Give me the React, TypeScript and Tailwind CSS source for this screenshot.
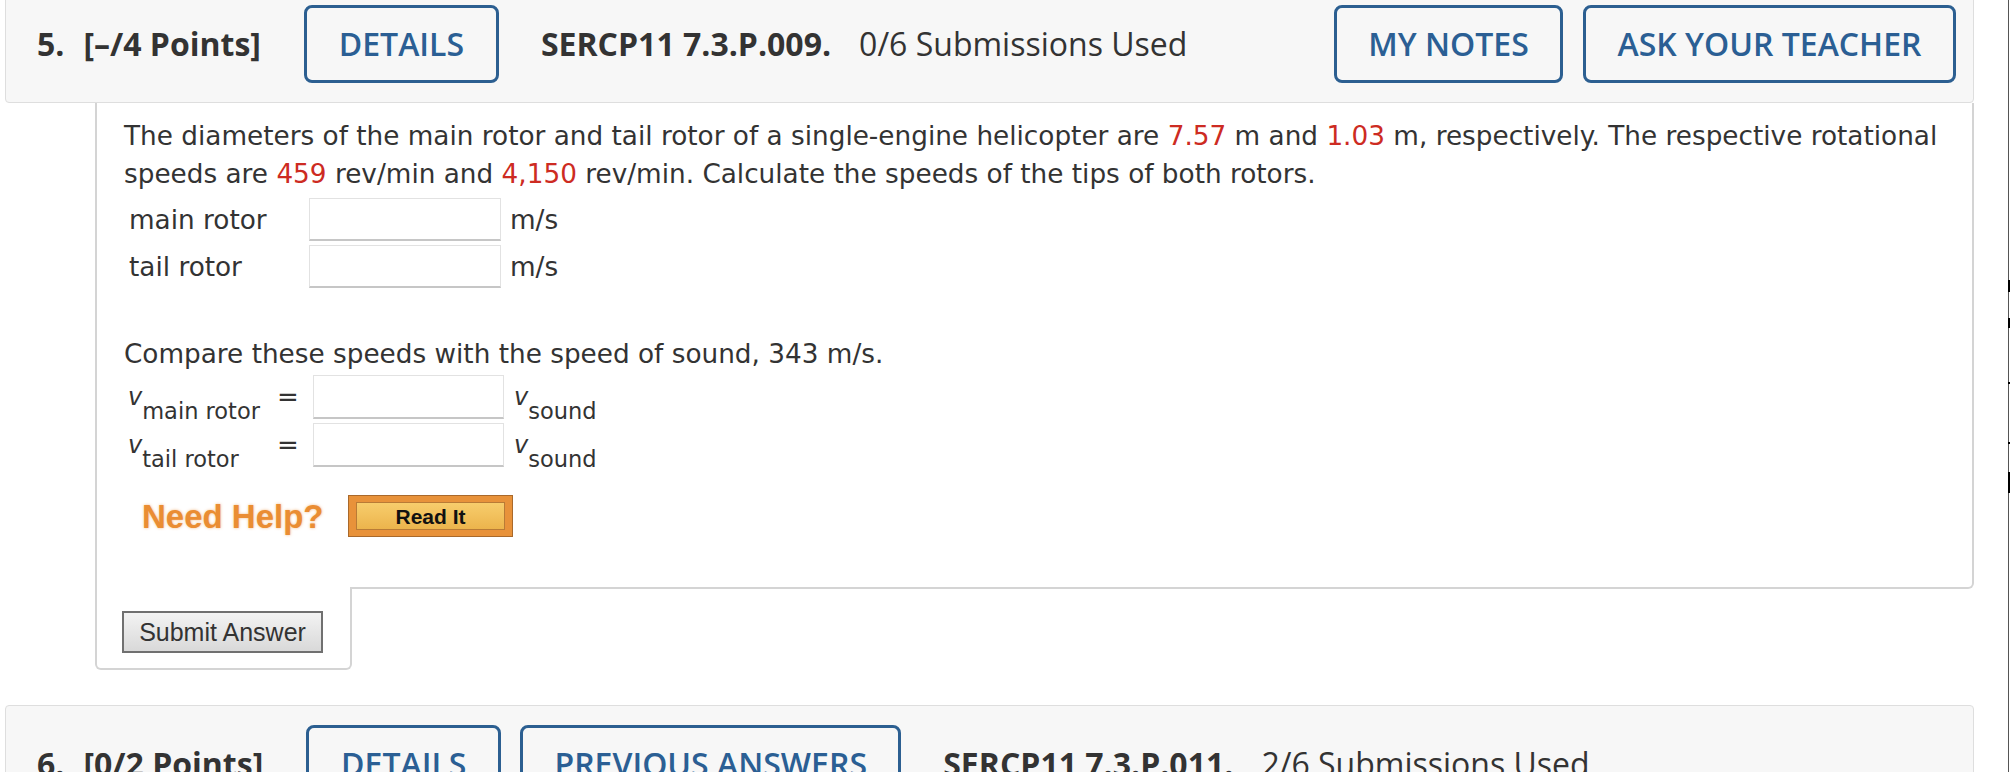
import React from "react";

const headerFont = { fontFamily: '"Open Sans", "Liberation Sans", sans-serif' };
const bodyFont = { fontFamily: '"DejaVu Sans", Verdana, sans-serif' };
const arialFont = { fontFamily: '"Liberation Sans", Arial, sans-serif' };

const OutlineButton = ({ label, width }: { label: string; width: string }) => (
  <div
    className={`flex h-[78px] shrink-0 items-center justify-center rounded-[8px] border-[3px] border-[#2c5f91] text-[32px] font-semibold text-[#2b5f94] ${width}`}
  >
    {label}
  </div>
);

const QuestionHeader = ({
  num,
  points,
  code,
  used,
  buttons,
  rightButtons,
  className,
}: {
  num: string;
  points: string;
  code: string;
  used: string;
  buttons: { label: string; width: string }[];
  rightButtons?: { label: string; width: string }[];
  className: string;
}) => (
  <div
    style={headerFont}
    className={`flex items-center rounded-[4px] border border-[#dedede] bg-[#f7f7f7] py-[19px] pl-[31px] pr-[17px] text-[32px] text-[#333] ${className}`}
  >
    <span className="font-bold">{num}</span>
    <span className="ml-[19px] font-bold">{points}</span>
    <div className="ml-[43px] flex gap-[19px]">
      {buttons.map((b) => (
        <OutlineButton key={b.label} label={b.label} width={b.width} />
      ))}
    </div>
    <span className="ml-[42px] whitespace-nowrap font-bold">{code}</span>
    <span className="ml-[28px] whitespace-nowrap">{used}</span>
    {rightButtons && (
      <div className="ml-auto flex gap-[20px]">
        {rightButtons.map((b) => (
          <OutlineButton key={b.label} label={b.label} width={b.width} />
        ))}
      </div>
    )}
  </div>
);

const Red = ({ children }: { children: React.ReactNode }) => (
  <span className="text-[#cd2b22]">{children}</span>
);

const AnswerBox = ({ width, height }: { width: string; height: string }) => (
  <div
    className={`shrink-0 border border-[#e2e2e2] border-b-2 border-b-[#c6c6c6] bg-white ${width} ${height}`}
  />
);

const SpeedRow = ({ label }: { label: string }) => (
  <div className="flex h-[47px] items-center pl-[5px]">
    <span className="w-[180px]">{label}</span>
    <AnswerBox width="w-[192px]" height="h-[43px]" />
    <span className="ml-[9px]">m/s</span>
  </div>
);

const RatioRow = ({ label }: { label: string }) => (
  <div className="flex h-[48px] items-center pl-[4px]">
    <span className="w-[149px] whitespace-nowrap text-[24px]">
      <i>v</i>
      <sub className="bottom-[-14px] text-[22.5px] not-italic">{label}</sub>
    </span>
    <span className="w-[36px] text-[26px]">=</span>
    <AnswerBox width="w-[191px]" height="h-[44px]" />
    <span className="ml-[10px] whitespace-nowrap text-[24px]">
      <i>v</i>
      <sub className="bottom-[-14px] text-[22.5px]">sound</sub>
    </span>
  </div>
);

const ScreenEdge = () => {
  // thin dark edge at the far right, with a few thicker marks
  const marks: { h: string; thick: boolean }[] = [
    { h: "h-[280px]", thick: false },
    { h: "h-[12px]", thick: true },
    { h: "h-[26px]", thick: false },
    { h: "h-[10px]", thick: true },
    { h: "h-[54px]", thick: false },
    { h: "h-[2px]", thick: true },
    { h: "h-[58px]", thick: false },
    { h: "h-[2px]", thick: true },
    { h: "h-[28px]", thick: false },
    { h: "h-[21px]", thick: true },
    { h: "h-[279px]", thick: false },
  ];
  return (
    <div className="flex w-[2px] shrink-0 flex-col">
      {marks.map((m, i) => (
        <div
          key={i}
          className={`${m.h} ${m.thick ? "w-[2px] bg-black" : "w-px bg-[#555]"}`}
        />
      ))}
    </div>
  );
};

export default function App() {
  return (
    <div className="flex h-[772px] w-[2010px] overflow-hidden bg-white">
      <div className="flex w-[1974px] shrink-0 flex-col pl-[5px]">
        <QuestionHeader
          className="mt-[-15px]"
          num="5."
          points="[–/4 Points]"
          code="SERCP11 7.3.P.009."
          used="0/6 Submissions Used"
          buttons={[{ label: "DETAILS", width: "w-[195px]" }]}
          rightButtons={[
            { label: "MY NOTES", width: "w-[229px]" },
            { label: "ASK YOUR TEACHER", width: "w-[373px]" },
          ]}
        />

        <div
          style={bodyFont}
          className="ml-[90px] rounded-br-[6px] border-x-2 border-b-2 border-[#d4d4d4] pb-[50px] pl-[27px] pr-[8px] pt-[14px] text-[26.3px] leading-[38px] text-[#333]"
        >
          <p>
            The diameters of the main rotor and tail rotor of a single-engine
            helicopter are <Red>7.57</Red> m and <Red>1.03</Red> m,
            respectively. The respective rotational speeds are <Red>459</Red>{" "}
            rev/min and <Red>4,150</Red> rev/min. Calculate the speeds of the
            tips of both rotors.
          </p>

          <div className="mt-[3px]">
            <SpeedRow label="main rotor" />
            <SpeedRow label="tail rotor" />
          </div>

          <p className="mt-[45px]">
            Compare these speeds with the speed of sound, 343 m/s.
          </p>

          <div>
            <RatioRow label="main rotor" />
            <RatioRow label="tail rotor" />
          </div>

          <div className="mt-[26px] flex h-[42px] items-center pl-[18px]" style={arialFont}>
            <span className="w-[206px] text-[33px] font-bold leading-none text-[#ea8d33] [text-shadow:0_0_3px_rgba(234,141,51,0.6)]">
              Need Help?
            </span>
            <div className="flex h-[42px] w-[165px] border border-[#a9692b] bg-[#e8923a] px-[7px] py-[6px]">
              <div className="flex flex-1 items-center justify-center border border-[#b97b36] bg-gradient-to-b from-[#f7cd6c] to-[#ecb44c] text-[21px] font-bold leading-none text-[#111]">
                Read It
              </div>
            </div>
          </div>
        </div>

        <div className="relative ml-[90px] mt-[-2px] w-[257px] rounded-b-[6px] border-x-2 border-b-2 border-[#d4d4d4] bg-white pb-[15px] pl-[25px] pt-[24px]">
          <div
            style={arialFont}
            className="flex h-[42px] w-[201px] items-center justify-center border-2 border-[#707070] bg-gradient-to-b from-[#f3f3f3] to-[#d9d9d9] text-[25px] leading-none text-[#333]"
          >
            Submit Answer
          </div>
        </div>

        <QuestionHeader
          className="mt-[35px]"
          num="6."
          points="[0/2 Points]"
          code="SERCP11 7.3.P.011."
          used="2/6 Submissions Used"
          buttons={[
            { label: "DETAILS", width: "w-[195px]" },
            { label: "PREVIOUS ANSWERS", width: "w-[381px]" },
          ]}
        />
      </div>
      <div className="flex-1" />
      <ScreenEdge />
    </div>
  );
}
